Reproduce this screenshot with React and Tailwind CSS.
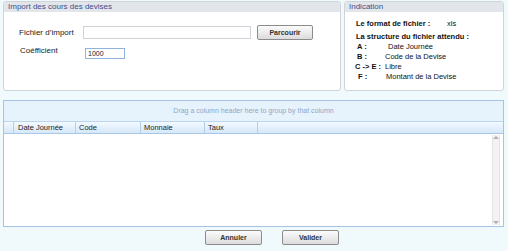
import React from "react";

const font = { fontFamily: '"Liberation Sans", Arial, sans-serif' };

function Panel({ title, className, children }) {
  return (
    <div className={`flex flex-col bg-white border border-[#cfd4da] rounded-[3px] overflow-hidden ${className}`}>
      <div className="h-[10px] bg-[#e2e5ea] flex items-center pl-[4px] text-[8px] leading-none text-[#3d4f8c]">
        {title}
      </div>
      <div className="relative flex-1">{children}</div>
    </div>
  );
}

function Btn({ label, className }) {
  return (
    <button className={`h-[15px] border border-[#8c8c8c] rounded-[2px] bg-gradient-to-b from-[#fbfbfb] to-[#dcdcdc] text-[7px] font-bold text-[#333] leading-none ${className}`}>
      {label}
    </button>
  );
}

export default function App() {
  const rows = [
    ["A :", "Date Journée", "pl-[12px] w-[43px]"],
    ["B :", "Code de la  Devise", "pl-[12px] w-[40px]"],
    ["C -> E :", "Libre", "pl-[10px] w-[40px]"],
    ["F :", "Montant de la  Devise", "pl-[13px] w-[41px]"],
  ];
  return (
    <div style={font} className="w-[508px] h-[251px] bg-[#f0fafc] flex flex-col pl-[3px] pr-[4px] pt-[1px] overflow-hidden">
      <div className="flex gap-[3px] h-[90px]">
        <Panel title="Import des cours des devises" className="w-[338px]">
          <div className="flex items-center mt-[13px] h-[15px]">
            <span className="text-[8px] text-[#222] pl-[15px] w-[79px]">Fichier d’import</span>
            <div className="w-[168px] h-[13px] border border-[#cfd3d8] bg-white" />
            <Btn label="Parcourir" className="ml-[6px] w-[56px]" />
          </div>
          <div className="flex items-center mt-[7px] h-[12px]">
            <span className="text-[8px] text-[#222] pl-[16px] w-[81px] -mt-[4px]">Coéfficient</span>
            <div className="w-[40px] h-[11px] border border-[#8fb3dc] bg-white text-[7px] leading-[9px] pl-[2px] text-[#222]">1000</div>
          </div>
        </Panel>
        <Panel title="Indication" className="flex-1">
          <div className="pl-[11px] pt-[8px] text-[7.5px] text-[#111] leading-none">
            <div className="flex font-bold">
              <span className="w-[91px]">Le format de fichier :</span>
              <span className="font-normal">xls</span>
            </div>
            <div className="font-bold mt-[5px]">La structure du fichier attendu :</div>
            <div className="mt-[3px] -ml-[11px] flex flex-col gap-[2.5px]">
              {rows.map(([k, v, c]) => (
                <div key={k} className="flex">
                  <span className={`font-bold ${c}`}>{k}</span>
                  <span>{v}</span>
                </div>
              ))}
            </div>
          </div>
        </Panel>
      </div>

      <div className="mt-[9px] h-[127px] border border-[#a5c3e4] bg-white flex flex-col">
        <div className="h-[21px] bg-[#e6f3fd] flex items-center justify-center text-[7px] text-[#8ea6c6] border-b border-[#bcd5ee]">
          Drag a column header here to group by that column
        </div>
        <div className="h-[12px] flex bg-gradient-to-b from-[#f3f9ff] to-[#d6e8f8] border-b border-[#a9c7e6] text-[7.5px] text-[#222] leading-none">
          <div className="w-[10px] border-r border-[#b5cfea]" />
          <div className="w-[62px] border-r border-[#b5cfea] pl-[4px] flex items-center">Date Journée</div>
          <div className="w-[65px] border-r border-[#b5cfea] pl-[3px] flex items-center">Code</div>
          <div className="w-[64px] border-r border-[#b5cfea] pl-[3px] flex items-center">Monnaie</div>
          <div className="w-[53px] border-r border-[#b5cfea] pl-[3px] flex items-center">Taux</div>
        </div>
        <div className="flex-1 flex justify-end pr-[3px] pt-[1px] pb-[1px]">
          <div className="w-[8px] bg-[#f2f2f2] border-x border-[#e4e4e4] flex flex-col justify-between items-center py-[1px]">
            <div className="w-0 h-0 border-x-[3px] border-x-transparent border-b-[3px] border-b-[#b0b0b0]" />
            <div className="w-0 h-0 border-x-[3px] border-x-transparent border-t-[3px] border-t-[#b0b0b0]" />
          </div>
        </div>
      </div>

      <div className="flex justify-center gap-[20px] mt-[3px] pl-[37px]">
        <Btn label="Annuler" className="w-[57px]" />
        <Btn label="Valider" className="w-[57px]" />
      </div>
    </div>
  );
}
